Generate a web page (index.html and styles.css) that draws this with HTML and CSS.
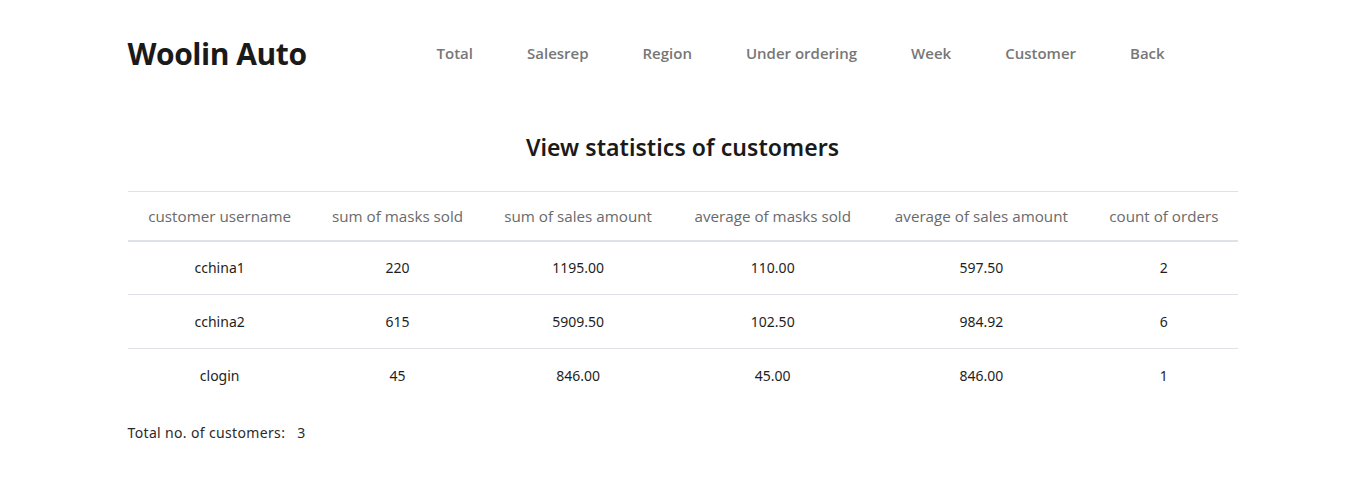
FILE: index.html
```html
<!DOCTYPE html>
<html lang="en">
<head>
<meta charset="utf-8">
<title>Woolin Auto</title>
<link rel="stylesheet" href="styles.css">
</head>
<body>
<div class="container">
  <header class="navbar">
    <a class="brand" href="#">Woolin Auto</a>
    <nav class="nav">
      <a href="#">Total</a>
      <a href="#">Salesrep</a>
      <a href="#">Region</a>
      <a href="#">Under ordering</a>
      <a href="#">Week</a>
      <a href="#">Customer</a>
      <a href="#">Back</a>
    </nav>
  </header>
  <main>
    <h2 class="title">View statistics of customers</h2>
    <table class="stats">
      <thead>
        <tr>
          <th>customer username</th>
          <th>sum of masks sold</th>
          <th>sum of sales amount</th>
          <th>average of masks sold</th>
          <th>average of sales amount</th>
          <th>count of orders</th>
        </tr>
      </thead>
      <tbody>
        <tr><td>cchina1</td><td>220</td><td>1195.00</td><td>110.00</td><td>597.50</td><td>2</td></tr>
        <tr><td>cchina2</td><td>615</td><td>5909.50</td><td>102.50</td><td>984.92</td><td>6</td></tr>
        <tr><td>clogin</td><td>45</td><td>846.00</td><td>45.00</td><td>846.00</td><td>1</td></tr>
      </tbody>
    </table>
    <p class="total">Total no. of customers:&nbsp;&nbsp;&nbsp;3</p>
  </main>
</div>
</body>
</html>
```
FILE: styles.css
```css
* { box-sizing: border-box; }
body {
  margin: 0;
  background: #fff;
  font-family: "Noto Sans", "Open Sans", sans-serif;
  color: #1e1e1e;
}
.container {
  width: 1110px;
  margin: 0 auto;
}
.navbar {
  display: flex;
  align-items: center;
  height: 106px;
  padding-bottom: 0;
}
.brand {
  font-family: "Open Sans", sans-serif;
  font-weight: 700;
  font-size: 30px;
  color: #1a1a1a;
  text-decoration: none;
  letter-spacing: -0.45px;
}
.nav {
  display: flex;
  margin-left: 103px;
}
.nav a {
  font-family: "Open Sans", sans-serif;
  font-size: 15px;
  font-weight: 600;
  color: #777;
  text-decoration: none;
  padding: 0 27px;
}
.title {
  margin: 25px 0 0;
  text-align: center;
  font-size: 23px;
  font-weight: 600;
  letter-spacing: 0.05px;
  color: #1a1a1a;
  height: 60px;
}
.stats {
  width: 100%;
  border-collapse: collapse;
  border-top: 1px solid #dee2e6;
}
.stats th {
  font-family: "Open Sans", sans-serif;
  font-weight: 400;
  font-size: 15.2px;
  color: #6a6a6a;
  height: 49px;
  border-bottom: 2px solid #dee2e6;
  text-align: center;
  padding: 0 12px;
}
.stats td {
  font-size: 14px;
  text-align: center;
  height: 54px;
  border-top: 1px solid #dee2e6;
  color: #1e1e1e;
}
.stats tbody tr:first-child td { border-top: none; }
.total {
  margin: 20px 0 0;
  font-size: 14px;
  letter-spacing: 0.35px;
  color: #2a2a2a;
}
```
